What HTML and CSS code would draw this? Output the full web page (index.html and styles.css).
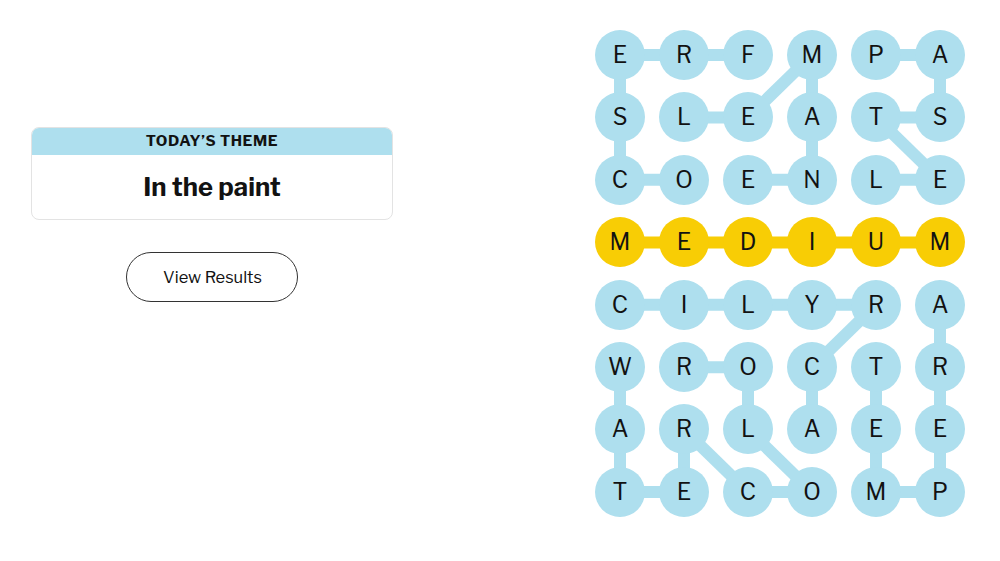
FILE: index.html
```html
<!DOCTYPE html>
<html lang="en">
<head>
<meta charset="utf-8">
<title>Strands</title>
<link rel="stylesheet" href="styles.css">
</head>
<body>
<main class="game">
  <section class="side">
    <div class="theme-card">
      <div class="theme-head">TODAY’S THEME</div>
      <div class="theme-body">In the paint</div>
    </div>
    <button class="results-btn" type="button">View Results</button>
  </section>
  <section class="board">
    <svg class="links" width="370" height="487" viewBox="0 0 370 487" aria-hidden="true">
      <g stroke="#aedfee" stroke-width="12" stroke-linecap="butt">
        <!-- FRESCO -->
        <line x1="153" y1="25" x2="89" y2="25"/>
        <line x1="89" y1="25" x2="25" y2="25"/>
        <line x1="25" y1="25" x2="25" y2="87.4"/>
        <line x1="25" y1="87.4" x2="25" y2="149.8"/>
        <line x1="25" y1="149.8" x2="89" y2="149.8"/>
        <!-- ENAMEL -->
        <line x1="153" y1="149.8" x2="217" y2="149.8"/>
        <line x1="217" y1="149.8" x2="217" y2="87.4"/>
        <line x1="217" y1="87.4" x2="217" y2="25"/>
        <line x1="217" y1="25" x2="153" y2="87.4"/>
        <line x1="153" y1="87.4" x2="89" y2="87.4"/>
        <!-- PASTEL -->
        <line x1="281" y1="25" x2="345" y2="25"/>
        <line x1="345" y1="25" x2="345" y2="87.4"/>
        <line x1="345" y1="87.4" x2="281" y2="87.4"/>
        <line x1="281" y1="87.4" x2="345" y2="149.8"/>
        <line x1="345" y1="149.8" x2="281" y2="149.8"/>
        <!-- ACRYLIC -->
        <line x1="217" y1="399.6" x2="217" y2="337.2"/>
        <line x1="217" y1="337.2" x2="281" y2="274.8"/>
        <line x1="281" y1="274.8" x2="25" y2="274.8"/>
        <!-- WATERCOLOR -->
        <line x1="25" y1="337.2" x2="25" y2="462"/>
        <line x1="25" y1="462" x2="89" y2="462"/>
        <line x1="89" y1="462" x2="89" y2="399.6"/>
        <line x1="89" y1="399.6" x2="153" y2="462"/>
        <line x1="153" y1="462" x2="217" y2="462"/>
        <line x1="217" y1="462" x2="153" y2="399.6"/>
        <line x1="153" y1="399.6" x2="153" y2="337.2"/>
        <line x1="153" y1="337.2" x2="89" y2="337.2"/>
        <!-- TEMPERA -->
        <line x1="281" y1="337.2" x2="281" y2="462"/>
        <line x1="281" y1="462" x2="345" y2="462"/>
        <line x1="345" y1="462" x2="345" y2="274.8"/>
      </g>
      <line x1="25" y1="212.4" x2="345" y2="212.4" stroke="#f8cd05" stroke-width="12"/>
    </svg>
    <div class="grid">
      <span class="cell">E</span><span class="cell">R</span><span class="cell">F</span><span class="cell">M</span><span class="cell">P</span><span class="cell">A</span>
      <span class="cell">S</span><span class="cell">L</span><span class="cell">E</span><span class="cell">A</span><span class="cell">T</span><span class="cell">S</span>
      <span class="cell">C</span><span class="cell">O</span><span class="cell">E</span><span class="cell">N</span><span class="cell">L</span><span class="cell">E</span>
      <span class="cell gold">M</span><span class="cell gold">E</span><span class="cell gold">D</span><span class="cell gold">I</span><span class="cell gold">U</span><span class="cell gold">M</span>
      <span class="cell">C</span><span class="cell">I</span><span class="cell">L</span><span class="cell">Y</span><span class="cell">R</span><span class="cell">A</span>
      <span class="cell">W</span><span class="cell">R</span><span class="cell">O</span><span class="cell">C</span><span class="cell">T</span><span class="cell">R</span>
      <span class="cell">A</span><span class="cell">R</span><span class="cell">L</span><span class="cell">A</span><span class="cell">E</span><span class="cell">E</span>
      <span class="cell">T</span><span class="cell">E</span><span class="cell">C</span><span class="cell">O</span><span class="cell">M</span><span class="cell">P</span>
    </div>
  </section>
</main>
</body>
</html>
```

FILE: styles.css
```css
* { box-sizing: border-box; }
html, body {
  margin: 0;
  padding: 0;
  background: #ffffff;
}
body {
  font-family: "Libre Franklin", Roboto, "Liberation Sans", sans-serif;
  color: #121212;
}
.game {
  display: flex;
  align-items: flex-start;
  padding: 30px 0 0 31px;
  gap: 202px;
}
.side {
  width: 362px;
  padding-top: 97px;
  display: flex;
  flex-direction: column;
  align-items: center;
}
.theme-card {
  width: 362px;
  height: 93px;
  border: 1px solid #e3e3e3;
  border-radius: 8px;
  overflow: hidden;
  display: flex;
  flex-direction: column;
}
.theme-head {
  height: 27px;
  background: #aedfee;
  display: flex;
  align-items: center;
  justify-content: center;
  font-size: 15px;
  font-weight: 700;
  letter-spacing: 0.6px;
  color: #121212;
  padding-bottom: 1px;
}
.theme-body {
  flex: 1;
  display: flex;
  align-items: center;
  justify-content: center;
  font-size: 25.5px;
  font-weight: 700;
  color: #121212;
  padding-bottom: 2px;
}
.results-btn {
  margin-top: 32px;
  width: 172px;
  height: 50px;
  border: 1px solid #333;
  border-radius: 25px;
  background: #fff;
  font-family: inherit;
  font-size: 16.5px;
  color: #121212;
  padding: 0 0 0 1px;
}
.board {
  position: relative;
  width: 370px;
  height: 487px;
}
.links {
  position: absolute;
  left: 0;
  top: 0;
}
.grid {
  position: relative;
  display: grid;
  grid-template-columns: repeat(6, 50px);
  grid-auto-rows: 50px;
  column-gap: 14px;
  row-gap: 12.4px;
}
.cell {
  width: 50px;
  height: 50px;
  border-radius: 50%;
  background: #aedfee;
  display: flex;
  align-items: center;
  justify-content: center;
  font-size: 23px;
  font-weight: 400;
  color: #121212;
}
.cell.gold {
  background: #f8cd05;
}
```
